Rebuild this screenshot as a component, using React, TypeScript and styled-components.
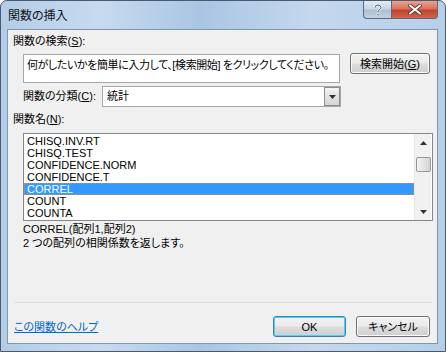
import React from 'react';
import styled, { createGlobalStyle } from 'styled-components';

const GlobalStyle = createGlobalStyle`
  html, body {
    margin: 0;
    padding: 0;
    background: #ffffff;
  }
  body {
    font-family: "Liberation Sans", "Noto Sans CJK JP", sans-serif;
    font-size: 11px;
    color: #000;
    font-feature-settings: "palt";
  }
`;

const Window = styled.div`
  width: 446px;
  height: 352px;
  box-sizing: border-box;
  border: 1px solid #4a5a6c;
  border-radius: 7px 7px 0 0;
  background: linear-gradient(90deg, #b3cce7 0%, #c7dbef 22%, #aac5e3 45%, #c4d8ee 70%, #b6cfe9 100%);
  display: flex;
  flex-direction: column;
  overflow: hidden;
`;

const TitleBar = styled.div`
  height: 28px;
  display: flex;
  align-items: flex-start;
  padding-left: 7px;
`;

const Title = styled.div`
  flex: 1;
  padding-top: 6px;
  font-family: "Noto Sans CJK JP", sans-serif;
  font-size: 12px;
  line-height: 16px;
  color: #111;
`;

const CaptionButton = styled.div<{ $close?: boolean }>`
  width: ${(p) => (p.$close ? 46 : 29)}px;
  height: 18px;
  box-sizing: border-box;
  border: 1px solid #5b6b7c;
  border-top: none;
  border-left: ${(p) => (p.$close ? 'none' : '1px solid #5b6b7c')};
  border-radius: ${(p) => (p.$close ? '0 0 4px 0' : '0 0 0 4px')};
  background: ${(p) =>
    p.$close
      ? 'linear-gradient(180deg, #e8a393 0%, #d9735e 45%, #c2432a 55%, #d0654d 100%)'
      : 'linear-gradient(180deg, #e3ecf5 0%, #c9d6e4 45%, #aebfd2 55%, #c3d2e2 100%)'};
  display: flex;
  align-items: center;
  justify-content: center;
  margin-right: ${(p) => (p.$close ? '7px' : '0')};
`;

const Client = styled.div`
  flex: 1;
  margin: 0 7px 7px 6px;
  border: 1px solid #8196ab;
  background: #f0f0f0;
  padding: 4px 5px 0 5px;
  display: flex;
  flex-direction: column;
  font-family: "Liberation Sans", "Noto Sans CJK JP", sans-serif;
`;

const Label = styled.div`
  line-height: 14px;
  height: 14px;
  white-space: nowrap;
  u { text-decoration: underline; }
`;

const Row = styled.div<{ $top: number }>`
  display: flex;
  align-items: flex-start;
  gap: 10px;
  margin-top: ${(p) => p.$top}px;
  padding-left: 10px;
`;

const SearchBox = styled.div`
  width: 317px;
  height: 29px;
  box-sizing: border-box;
  margin-top: 1px;
  border: 1px solid #a3a6ab;
  background: #fff;
  padding: 3px 3px;
  line-height: 14px;
  letter-spacing: -0.4px;
  white-space: nowrap;
  overflow: hidden;
`;

const Button = styled.div<{ $w: number; $default?: boolean }>`
  width: ${(p) => p.$w}px;
  height: 21px;
  box-sizing: border-box;
  border: 1px solid ${(p) => (p.$default ? '#3c7fb1' : '#707070')};
  border-radius: 3px;
  background: linear-gradient(180deg, #f2f2f2 0%, #ebebeb 48%, #dddddd 52%, #cfcfcf 100%);
  box-shadow: inset 0 0 0 1px ${(p) => (p.$default ? '#48d4fc' : '#fbfbfb')};
  display: flex;
  align-items: center;
  justify-content: center;
  line-height: 14px;
  white-space: nowrap;
`;

const CategoryLabel = styled(Label)`
  width: 69px;
  margin-top: 3px;
`;

const Select = styled.div`
  width: 239px;
  height: 21px;
  box-sizing: border-box;
  border: 1px solid #a3a6ab;
  background: #fff;
  display: flex;
  align-items: stretch;
`;

const SelectValue = styled.div`
  flex: 1;
  padding-left: 4px;
  line-height: 19px;
`;

const DropButton = styled.div`
  width: 16px;
  box-sizing: border-box;
  border: 1px solid #8c8c8c;
  background: linear-gradient(180deg, #f3f3f3 0%, #e2e2e2 50%, #d4d4d4 100%);
  display: flex;
  align-items: center;
  justify-content: center;
`;

const ListBox = styled.div`
  width: 410px;
  height: 88px;
  box-sizing: border-box;
  margin: 7px 0 0 10px;
  border: 1px solid #828790;
  background: #fff;
  display: flex;
  padding: 0 1px 0 0;
`;

const Items = styled.div`
  flex: 1;
  padding-top: 1px;
`;

const Item = styled.div<{ $selected?: boolean }>`
  height: 12px;
  line-height: 12px;
  padding-left: 3px;
  box-sizing: border-box;
  white-space: nowrap;
  color: ${(p) => (p.$selected ? '#fff' : '#000')};
  background: ${(p) => (p.$selected ? '#3399ff' : 'transparent')};
  outline: ${(p) => (p.$selected ? '1px dotted #e08a2c' : 'none')};
  outline-offset: -1px;
`;

const ScrollBar = styled.div`
  width: 17px;
  background: #f1f1f1;
  border-left: 1px solid #e6e6e6;
  box-sizing: border-box;
  display: flex;
  flex-direction: column;
  align-items: center;
`;

const ScrollArrow = styled.div`
  height: 17px;
  width: 100%;
  display: flex;
  align-items: center;
  justify-content: center;
`;

const ScrollSpace = styled.div`
  flex: 1;
`;

const Thumb = styled.div`
  width: 15px;
  height: 15px;
  box-sizing: border-box;
  margin-top: 6px;
  border: 1px solid #969696;
  border-radius: 2px;
  background: linear-gradient(90deg, #f3f3f3 0%, #e4e4e4 50%, #d2d2d2 100%);
`;

const Description = styled.div`
  margin: 1px 0 0 10px;
  line-height: 14px;
`;

const Separator = styled.div`
  margin-top: auto;
  margin-left: 1px;
  height: 1px;
  background: #d5dfe5;
`;

const Footer = styled.div`
  display: flex;
  align-items: center;
  margin: 13px 2px 6px 1px;
  gap: 10px;
`;

const HelpLink = styled.a`
  flex: 1;
  color: #0066cc;
  text-decoration: underline;
  line-height: 14px;
  cursor: pointer;
`;

const Triangle = ({ up }: { up?: boolean }) => (
  <svg width="7" height="4" viewBox="0 0 7 4">
    <polygon points={up ? '3.5,0 7,4 0,4' : '0,0 7,0 3.5,4'} fill="#333" />
  </svg>
);

const functions = [
  'CHISQ.INV.RT',
  'CHISQ.TEST',
  'CONFIDENCE.NORM',
  'CONFIDENCE.T',
  'CORREL',
  'COUNT',
  'COUNTA',
];

export default function App() {
  return (
    <>
      <GlobalStyle />
      <Window>
        <TitleBar>
          <Title>関数の挿入</Title>
          <CaptionButton>
            <svg width="10" height="12" viewBox="0 0 10 12">
              <path d="M2 3.5 Q2 1 5 1 Q8 1 8 3.5 Q8 5 6 6 Q5 6.6 5 8" fill="none" stroke="#fff" strokeWidth="2.2" />
              <path d="M2 3.5 Q2 1 5 1 Q8 1 8 3.5 Q8 5 6 6 Q5 6.6 5 8" fill="none" stroke="#4a5563" strokeWidth="1" />
              <rect x="4" y="9.5" width="2" height="2" fill="#4a5563" stroke="#fff" strokeWidth="0.6" />
            </svg>
          </CaptionButton>
          <CaptionButton $close>
            <svg width="14" height="11" viewBox="0 0 14 11">
              <path d="M2 1.5 L12 9.5 M12 1.5 L2 9.5" stroke="#5a2a20" strokeWidth="3.6" strokeLinecap="round" />
              <path d="M2 1.5 L12 9.5 M12 1.5 L2 9.5" stroke="#fff" strokeWidth="2.2" strokeLinecap="round" />
            </svg>
          </CaptionButton>
        </TitleBar>
        <Client>
          <Label>
            関数の検索(<u>S</u>):
          </Label>
          <Row $top={5}>
            <SearchBox>何がしたいかを簡単に入力して、[検索開始] をクリックしてください。</SearchBox>
            <Button $w={80}>
              検索開始(<u>G</u>)
            </Button>
          </Row>
          <Row $top={3}>
            <CategoryLabel>
              関数の分類(<u>C</u>):
            </CategoryLabel>
            <Select>
              <SelectValue>統計</SelectValue>
              <DropButton>
                <Triangle />
              </DropButton>
            </Select>
          </Row>
          <Label style={{ marginTop: 5 }}>
            関数名(<u>N</u>):
          </Label>
          <ListBox>
            <Items>
              {functions.map((f) => (
                <Item key={f} $selected={f === 'CORREL'}>
                  {f}
                </Item>
              ))}
            </Items>
            <ScrollBar>
              <ScrollArrow>
                <Triangle up />
              </ScrollArrow>
              <Thumb />
              <ScrollSpace />
              <ScrollArrow>
                <Triangle />
              </ScrollArrow>
            </ScrollBar>
          </ListBox>
          <Description>
            CORREL(配列1,配列2)
            <br />2 つの配列の相関係数を返します。
          </Description>
          <Separator />
          <Footer>
            <HelpLink>この関数のヘルプ</HelpLink>
            <Button $w={73} $default>
              OK
            </Button>
            <Button $w={74}>キャンセル</Button>
          </Footer>
        </Client>
      </Window>
    </>
  );
}
